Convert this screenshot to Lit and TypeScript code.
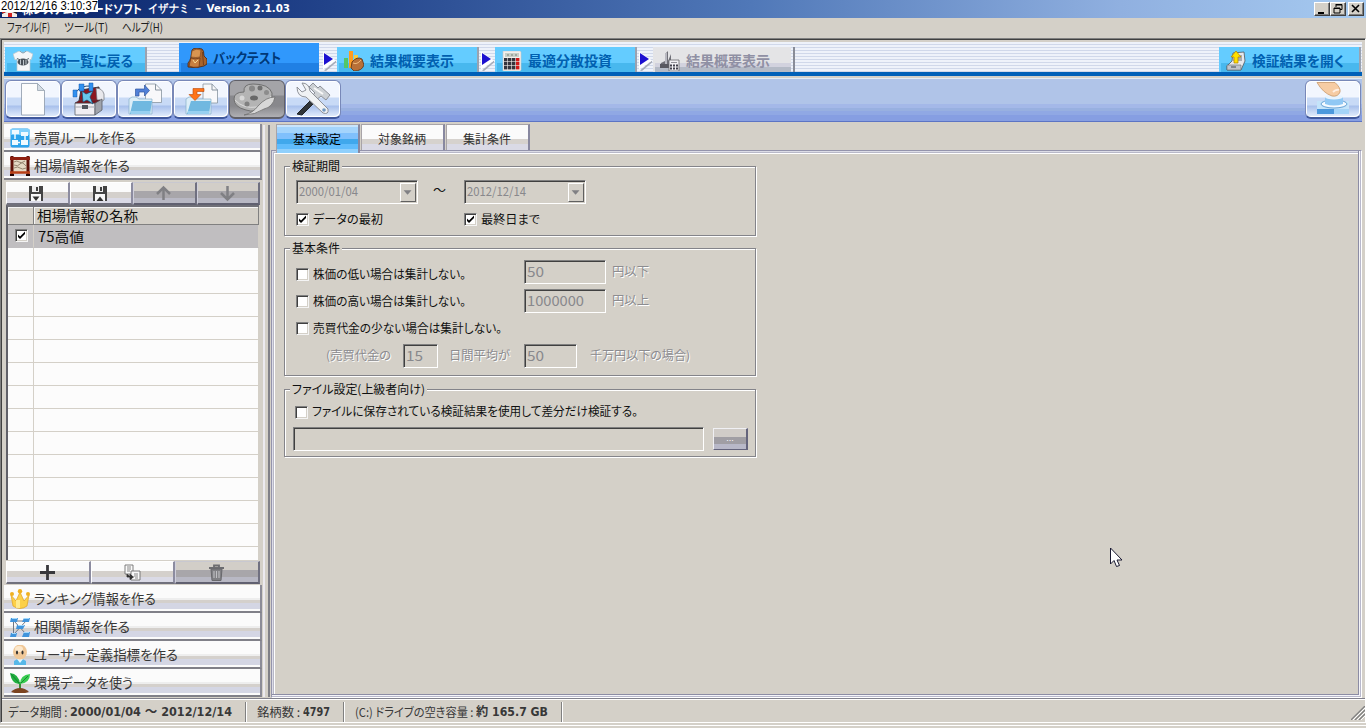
import { LitElement, css, html, nothing, svg } from 'lit'
import type { SVGTemplateResult } from 'lit'
import { styleMap } from 'lit/directives/style-map.js'
import { classMap } from 'lit/directives/class-map.js'

// Bitmap-style UI text: condensed or stretched so that the label takes exactly `w` pixels.
export class UiText extends LitElement {
  static properties = {
    text: { type: String },
    w: { type: Number },
  }

  declare text: string
  declare w: number

  constructor() {
    super()
    this.text = ''
    this.w = 0
  }

  static styles = css`
    :host {
      display: inline-block;
      white-space: pre;
      flex: none;
    }
    span {
      display: inline-block;
      transform-origin: 0 50%;
    }
  `

  updated() {
    this.style.width = `${this.w}px`
    const span = this.renderRoot.querySelector('span')
    if (!span) return
    span.style.transform = 'none'
    const natural = span.getBoundingClientRect().width
    if (natural > 0) span.style.transform = `scaleX(${this.w / natural})`
  }

  render() {
    return html`<span>${this.text}</span>`
  }
}

customElements.define('ui-text', UiText)

const t = (text: string, w: number) => html`<ui-text .text=${text} .w=${w}></ui-text>`

const icons: Record<string, SVGTemplateResult> = {
  shirt: svg`
    <path d="M6 0 L0 3 L2 9 L4 8 V20 H17 V8 L18 9 L20 3 L14 0 Q10 3 6 0Z" fill="#f4f6f8" stroke="#b8c4cc" stroke-width=".7"/>
    <path d="M7 0 Q10 4 13 0" fill="none" stroke="#88a4b4"/>
    <path d="M4 7.500 Q10 11 16 7.500" fill="none" stroke="#586870"/><ellipse cx="10" cy="11" rx="5.500" ry="3.500" fill="#485058"/><path d="M7.500 8.500v5M10.500 9v5.500M13 8.500v5" stroke="#dce4e8" stroke-width=".8"/>`,
  bag: svg`
    <path d="M5 2 Q6 0 10 0 L15 1 Q17 2 17 8 L20 11 L20 16 L17 18 Q9 21 1 19 L1 15 Q3 13 4 9 Z" fill="#a8642c" stroke="#4c2410" stroke-width=".8"/>
    <path d="M5 3 Q9 0 14 2 L13 9 Q9 10 4 9Z" fill="#d89450" stroke="#7c4420" stroke-width=".6"/>
    <path d="M4 10 Q8 12 13 10 L12 19 Q6 20 2 18Z" fill="#c88040" stroke="#683414" stroke-width=".7"/>
    <path d="M6 12l2 3 3-3" fill="none" stroke="#f4d890"/><path d="M15.500 4l1 13" stroke="#74401c"/>`,
  chartBag: svg`
    <path d="M0 7h4v10H0z" fill="#50c868"/><path d="M5 0h4v17H5z" fill="#ff9c20"/><path d="M10 4h4v12h-4z" fill="#f8cc40"/>
    <path d="M8 11 Q13 5 18 8 L20 14 Q18 20 10 20 L7 17Z" fill="#b87038" stroke="#5c3010" stroke-width=".8"/>
    <path d="M9 12 Q13 14 17 9" fill="none" stroke="#f0b878"/>`,
  calc: svg`
    <path d="M1 0h17l1 1v18l-1 1H1z" fill="#f4f0ec" stroke="#c8c8c8" stroke-width=".6"/><path d="M3 2h14v4H3z" fill="#c8d0c8"/>
    <path d="M5 4h2M9 4h2M13 4h2" stroke="#788078"/>
    ${[0, 1, 2, 3].map((c) => [0, 1, 2].map((r) => svg`<rect x=${2 + c * 4} y=${7 + r * 4} width="3.400" height="3.400" fill=${c === 3 ? '#d01818' : '#34343c'}></rect>`))}`,
  chartCalc: svg`
    <path d="M0 16l1-4 4-2V3l3-3v10l3-7v8h4v5z" fill="#707078"/><path d="M5 2h2v11H5z" fill="#b8b8c0"/><path d="M0 13h9v4H0z" fill="#585860"/>
    <path d="M9 9h10v11H9z" fill="#f0f0f4" stroke="#68686c" stroke-width=".8"/><path d="M11 11.500h6" stroke="#909098"/>
    <path d="M10 14.500h8M10 17.500h8" stroke="#40404c" stroke-width="2" stroke-dasharray="2 1"/>`,
  openBox: svg`
    <path d="M7 2 L18 1 L19 10 L15 19 L1 19 L1 15 L6 10Z" fill="#e8e8ec" stroke="#505860" stroke-width=".8"/>
    <path d="M8 4h8v6H7z" fill="#a8acb4"/><path d="M1 14h14v5H1z" fill="#c0c4cc" stroke="#606870" stroke-width=".6"/>
    <path d="M5 16h5" stroke="#404850"/><path d="M10 0 L15 6h-3v6H8V6H5z" fill="#ffe000" stroke="#b08000" stroke-width=".7"/>`,
  page: svg`
    <path d="M16.500 3.500h16l7 7v24.500H16.500z" fill="#fcfcfc" stroke="#8c98a8" stroke-width=".8"/><path d="M32.500 3.500v7h7z" fill="#d4dce4" stroke="#98a4b0" stroke-width=".8"/>`,
  chest: svg`
    <path d="M20 10 L38 7 L38 20 L34 21H18z" fill="#8c1820" stroke="#383840"/><path d="M35 8 Q41 8 43 14 V20 L38 23 L36 20z" fill="#e8e8ec" stroke="#6c7078" stroke-width=".7"/>
    <path d="M14 23h20v12H14z" fill="#f0eef2" stroke="#60646c" stroke-width=".8"/><path d="M34 23l7-4v11l-7 5z" fill="#a0a4ac" stroke="#585c64" stroke-width=".8"/>
    <path d="M14 23l5-3h20l-5 3z" fill="#7c1018" stroke="#484850" stroke-width=".6"/><path d="M14 27h20" stroke="#a4a8b0"/><path d="M21 25h6v4h-6z" fill="#50545c"/>
    <path d="M14 14 Q18 5 31 6" fill="none" stroke="#204870"/><path d="M12 10h4v7h-4z M18 4h5v7h-5z M28 3h4v8h-4z" fill="#3090f0" stroke="#1858a8" stroke-width=".5"/><path d="M21 11l4 3 7-3-3 6 3 7-6-4-4 2z" fill="#68c8ec" stroke="#184870" stroke-width=".7"/>`,
  folderOut: svg`
    <path d="M28.500 4h10l6 6v12.500H28.500z" fill="#f8f8fa" stroke="#8894a0" stroke-width=".8"/><path d="M38.500 4v6h6" fill="none" stroke="#8894a0"/>
    <path d="M12 19l3-2h4l3 2h13v15H12z" fill="#dceef8" stroke="#88b0c8" stroke-width=".7"/><path d="M16 21h19l-2 13H13z" fill="#70b8e0"/><path d="M14 32.500h19" stroke="#98d0f0" stroke-width="3"/>
    <path d="M18.500 16V9h9V5l5 5.500-5 5.500v-4H22v4z" fill="#5080d8" stroke="#3058a0" stroke-width=".7"/>`,
  folderIn: svg`
    <path d="M30 4h9l5.500 6v13H30z" fill="#f8f8fa" stroke="#8894a0" stroke-width=".8"/><path d="M39 4v6h6" fill="none" stroke="#8894a0"/>
    <path d="M13 19l3-2h4l3 2h15v15H13z" fill="#dceef8" stroke="#88b0c8" stroke-width=".7"/><path d="M18 21h20l-2 13H14z" fill="#70b8e0"/><path d="M15 32.500h21" stroke="#98d0f0" stroke-width="3"/>
    <path d="M31 8.500H20v6h-4l6 6 6-6h-4v-3h7z" fill="#ff7418" stroke="#b84808" stroke-width=".6"/>`,
  palette: svg`
    <path d="M5 19 Q5 12 15 12 Q14 4 24 4 Q40 4 43 13 Q44 23 34 28 Q26 33 17 30 Q5 27 5 19Z" fill="#b4b4b4" stroke="#707070"/>
    <path d="M6 20 Q14 29 28 27 Q38 24 42 16" fill="none" stroke="#dcdcdc"/><circle cx="23" cy="8.500" r="3" fill="#888"/><circle cx="31" cy="8" r="2.500" fill="#707070"/><circle cx="37.500" cy="12.500" r="2.500" fill="#8c8c8c"/>
    <circle cx="13" cy="18" r="2.500" fill="#d8d8d8"/><circle cx="18" cy="24" r="2.500" fill="#808080"/><ellipse cx="25" cy="18" rx="4" ry="2.500" fill="#686868"/>
    <path d="M15 35 Q24 33 29 26 Q37 17 46 17 Q44 27 35 29 Q26 35 15 35z" fill="#d8d8d8" stroke="#707070" stroke-width=".8"/>`,
  tools: svg`
    <path d="M12 34 L28 18 L31 21 L17 35 Z" fill="#303438" stroke="#202428"/><path d="M25 17 L30 13 L24 7 L28 3 L33 8 L35 6 L45 15 L41 20 L36 16 L30 21Z" fill="#ccd0d4" stroke="#787c84" stroke-width=".8"/><path d="M29 8l9 6" stroke="#f8f8f8" stroke-width="2"/>
    <path d="M12 7 L17 12 L21 10 L17 3 Q24 3 25 11 L43 29 Q44 35 38 33 L21 17 Q12 17 12 7Z" fill="#f0f2f4" stroke="#84888e" stroke-width=".9"/><circle cx="39" cy="30" r="1.800" fill="#7098c0"/>`,
  press: svg`
    <path d="M12 28h32v6H12z" fill="#4c98dc"/><path d="M12 21h32v8H12z" fill="#c4e4fa"/><path d="M29 29h15v5H29z" fill="#a4d4f8"/><ellipse cx="29" cy="24" rx="13" ry="4" fill="#f4faff" stroke="#5898d0" stroke-width=".9"/>
    <path d="M20 17v7q9 3 18 0v-7z" fill="#90c8f4"/><ellipse cx="29" cy="17" rx="9" ry="2.500" fill="#e8f4ff"/>
    <path d="M12 2.500H30 Q36 8 35 12 Q33 17 27 16 Q18 13 12 2.500Z" fill="#f6cca4" stroke="#c89868" stroke-width=".8"/><path d="M28 12 Q31 9 34 10" fill="none" stroke="#fff0e4" stroke-width="1.800"/>`,
  flow: svg`
    <rect x=".5" y=".5" width="19" height="19" rx="2" fill="#2ca4ec"/><path d="M.5 1h19v6H.5z" fill="#80d0fc"/>
    <path d="M2 2h7v4H2z M11 4h7v4h-7z M2 12h6v5H2z M11 12h7v5h-7z" fill="#f0faff"/><path d="M5 6v5M15 8v4M7 14.500h3" stroke="#f0faff" stroke-width="1.500"/>`,
  frame: svg`
    <path d="M2 2h16v14H2z" fill="#e4d8c4"/><path d="M4 6q3-2 5 0t6-1M4 9q4 2 6-1t6 2M4 12q4-2 6 0t6 0" fill="none" stroke="#8c7c68" stroke-width=".9"/>
    <path d="M2 0v19M18 0v19" stroke="#5c1008" stroke-width="3"/><path d="M0 2.500h20" stroke="#902010" stroke-width="3"/><path d="M0 16.500h20" stroke="#b84018" stroke-width="2.500"/><path d="M0 19h4M16 19h4" stroke="#200404" stroke-width="2"/>`,
  crown: svg`
    <path d="M1 6l5 6 4-9 4 9 5-6-2 11q-7 5-14 0z" fill="#fcd048" stroke="#e0a020" stroke-width=".7"/><path d="M6 11h4v8H6z" fill="#fff0a0" opacity=".8"/>
    <circle cx="10" cy="2.200" r="2.200" fill="#f0b020"/><circle cx="2" cy="5" r="2" fill="#f0b020"/><circle cx="18" cy="5" r="2" fill="#f0b020"/>`,
  relation: svg`
    <path d="M4 4l12 13M16 4L4 17M4 4h12M3.500 4v13" fill="none" stroke="#707884"/>
    <path d="M1 1h7l-1 4H0zM14 1h6l-1 4h-7zM7 8h8l-2 4H6zM1 16h6l-1 4H0zM14 15h6l-1 5h-7z" fill="#4094dc"/><path d="M2 1.500h5M14 1.500h5M8 8.500h6M2 16.500h4M14 15.500h5" stroke="#a0d8fc"/>`,
  person: svg`
    <path d="M4 20v-4q6-5 12 0v4z" fill="#58b8e8"/><path d="M7 14l3 4 3-4z" fill="#e8f8ff"/><ellipse cx="10" cy="7" rx="7" ry="7.500" fill="#f0c898"/><ellipse cx="9" cy="4" rx="4" ry="3" fill="#fce8cc"/>
    <ellipse cx="7" cy="7.500" rx="1" ry="2" fill="#303030"/><ellipse cx="12.500" cy="7.500" rx="1" ry="2" fill="#303030"/>`,
  sprout: svg`
    <path d="M10 18V9" stroke="#388c38" stroke-width="2"/><path d="M10 11Q2 12 0 0Q9 1 10 11Z" fill="#20b040"/><path d="M10 11Q10 2 20 1Q20 10 10 11Z" fill="#38cc50"/><path d="M1 1l8 9M11 10l7-7" stroke="#107828" stroke-width=".8"/>
    <path d="M1 19q4-4 9-4t9 4q-9 3-18 0z" fill="#7c4420"/>`,
  save: svg`
    <path d="M1 1h14v15H1z" fill="#444"/><path d="M4 1h7v6H4z" fill="#f0f0f0"/><path d="M8 2h2v4H8z" fill="#404040"/><path d="M3 9h10v7H3z" fill="#f8f8f8"/><path d="M4.500 11.500h7l-3.500 4.500z" fill="#303030"/>`,
  load: svg`
    <path d="M1 1h14v15H1z" fill="#444"/><path d="M4 1h7v6H4z" fill="#f0f0f0"/><path d="M8 2h2v4H8z" fill="#404040"/><path d="M3 9h10v7H3z" fill="#f8f8f8"/><path d="M4.500 16h7l-3.500-4.500z" fill="#303030"/>`,
  up: svg`<path d="M8.500 15V3M2 9l6.500-6.500L15 9" fill="none" stroke="#808084" stroke-width="2.500"/>`,
  down: svg`<path d="M8.500 1v13M2 8l6.500 6.500L15 8" fill="none" stroke="#808084" stroke-width="2.500"/>`,
  plus: svg`<path d="M8.500 1v15M1 8.500h15" stroke="#38383c" stroke-width="2.800"/>`,
  copy: svg`
    <path d="M1 1h8v9H1z" fill="#fafafa" stroke="#707070" stroke-width=".9"/><path d="M3 3h4M3 5h4M3 7h3" stroke="#888"/><path d="M7 7h9v9H7z" fill="#fafafa" stroke="#707070" stroke-width=".9"/>
    <path d="M10 10h4M10 12h4M11 14h3" stroke="#888"/><path d="M3 10v3h4M6 10.500l3.500 2.500L6 15.500z" fill="#303030" stroke="#303030" stroke-width=".8"/>`,
  trash: svg`<path d="M1 4h15M6 3V1.500h5V3" fill="none" stroke="#6c6c70" stroke-width="1.800"/><path d="M3 5h11l-1 11.500H4z" fill="#808084" stroke="#68686c"/><path d="M6 7v7M8.500 7v7M11 7v7" stroke="#c0c0c4" stroke-width="1.100"/>`,
  app: svg`<path d="M0 1h15v16H0z" fill="#301818"/><path d="M3 5h9v7H3z" fill="#f0d0b0"/><path d="M0 14q7-5 15 0v3H0z" fill="#f4ece8"/><path d="M6 13h4v4H6zM0 11h3v2H0z" fill="#d02020"/>`,
}

const icon = (name: string, w: number, h = w) =>
  html`<svg class="icon" width=${w} height=${h} viewBox="0 0 ${w} ${h}">${icons[name]}</svg>`

interface Step {
  icon: string
  text: string
  w: number
  state: string
}

const steps: Step[] = [
  { icon: 'bag', text: 'バックテスト', w: 68, state: 'on' },
  { icon: 'chartBag', text: '結果概要表示', w: 84, state: '' },
  { icon: 'calc', text: '最適分散投資', w: 84, state: '' },
  { icon: 'chartCalc', text: '結果概要表示', w: 84, state: 'off' },
]

const tools = ['page', 'chest', 'folderOut', 'folderIn', 'palette', 'tools']

export class AppRoot extends LitElement {
  static styles = css`
    *,
    *::before,
    *::after {
      box-sizing: border-box;
    }
    :host {
      display: flex;
      flex-direction: column;
      position: relative;
      width: 1366px;
      height: 728px;
      overflow: hidden;
      background: #d4d0c8;
      color: #101010;
      font: 12px/16px 'Noto Sans CJK JP', sans-serif;
      font-feature-settings: 'palt';
    }
    .icon {
      display: block;
      flex: none;
    }
    /* title + menu */
    .title {
      display: flex;
      align-items: center;
      flex: none;
      height: 18px;
      padding: 0 2px 0 2px;
      background: linear-gradient(90deg, #0a246a, #1c3c84 20%, #5078b8 55%, #90b0e0 82%, #a6caf0);
      color: #fff;
      font-weight: 700;
    }
    .title .icon {
      margin-right: 4px;
    }
    .title .version {
      font-family: 'DejaVu Sans', sans-serif;
      font-size: 11px;
      margin-left: 6px;
    }
    .winbtns {
      display: flex;
      margin-left: auto;
    }
    .winbtns svg {
      width: 16px;
      height: 14px;
      background: #d4d0c8;
      border: 1px solid;
      border-color: #fff #404040 #404040 #fff;
      box-shadow: inset -1px -1px #808080;
    }
    .winbtns svg:last-child {
      margin-left: 2px;
    }
    .clock {
      position: absolute;
      left: 0;
      top: 0;
      width: 98px;
      height: 12px;
      padding-left: 1px;
      background: #fff;
      color: #000;
      font: 12px/12px 'Liberation Sans', sans-serif;
    }
    .menu {
      display: flex;
      flex: none;
      height: 20px;
      gap: 14px;
      padding: 1px 0 0 7px;
      color: #202020;
    }
    .client {
      display: flex;
      flex-direction: column;
      flex: none;
      height: 685px;
      border-top: 1px solid #808080;
      border-left: 1px solid #808080;
      border-right: 1px solid #fff;
      border-bottom: 1px solid #fff;
    }
    .inner {
      display: flex;
      flex-direction: column;
      height: 683px;
      border-top: 1px solid #404040;
      border-left: 1px solid #404040;
      padding: 2px 3px 0 2px;
    }
    /* step tabs */
    .steps {
      display: flex;
      align-items: flex-end;
      flex: none;
      height: 34px;
      border-bottom: 4px solid #0060b8;
      background: repeating-linear-gradient(#eef2fa 0 2px, #d0d8ea 2px 3px);
      padding: 0 1px;
    }
    .step {
      display: flex;
      align-items: center;
      flex: none;
      width: 142px;
      height: 25px;
      padding: 2px 0 0 7px;
      gap: 6px;
      background: linear-gradient(#64ccff 0 16px, #48b8ee 16px) 2px 0 / 138px 100% no-repeat,
        linear-gradient(#64ccff, #64ccff) 0 0 / 140px 100% no-repeat;
      border-right: 2px solid #9aa2b0;
      color: #0060b0;
      font-size: 14px;
      font-weight: 700;
    }
    .step ui-text {
      margin-top: -2px;
    }
    .step.on {
      height: 29px;
      width: 140px;
      border-right: 0;
      background: linear-gradient(#3098fc 0 20px, #2080e4 20px) 2px 0 / 138px 100% no-repeat,
        #3098fc;
      color: #003878;
      padding-left: 8px;
      padding-bottom: 1px;
    }
    .step.off {
      background: linear-gradient(#e4e4e6 0 16px, #d2d2de 16px 20px, #b4bac6 20px) 2px 0 / 136px
          100% no-repeat,
        linear-gradient(#e4e4e6, #e4e4e6) 0 0 / 138px 100% no-repeat;
      border-right-color: #888c98;
      color: #9090a4;
    }
    .back {
      margin-right: 32px;
      padding-left: 8px;
    }
    .open {
      margin-left: auto;
    }
    .arrow {
      flex: none;
      width: 14px;
      height: 20px;
      margin: 0 0 1px 2px;
    }
    .step.on + .arrow {
      margin-left: 4px;
    }
    /* toolbar */
    .tools {
      display: flex;
      flex: none;
      height: 44px;
      margin-top: 2px;
      padding: 2px 1px;
      background: linear-gradient(#e0ecf8 0 1px, #b0c4e8 1px 26px, #a4b8e8 26px 30px, #98b0e0 30px 33px, #90a8e4 33px 37px, #869ee2 37px 43px, #5c74c4 43px);
    }
    .tool {
      width: 56px;
      height: 39px;
      border: 1px solid #7888b8;
      border-bottom: 2px solid #40589c;
      border-radius: 6px;
      background: linear-gradient(#f2f6fe 0 16px, #c8daf6 17px 24px, #a8c0ec 25px, #e4eefc 36px);
      box-shadow: inset 1px 1px #fff, inset -1px -1px #fff;
    }
    .tool svg {
      margin: -1px 0 0 -1px;
    }
    .tool.on {
      background: linear-gradient(#a4a4a8 0 14px, #88888c 15px 25px, #b0b0b4);
      box-shadow: none;
      border-color: #606068;
    }
    .run {
      margin-left: auto;
    }
    /* body */
    .body {
      display: flex;
      flex: none;
      height: 576px;
    }
    .side {
      width: 258px;
      padding-top: 2px;
    }
    .nav {
      display: flex;
      align-items: center;
      gap: 4px;
      height: 28px;
      padding: 1px 0 0 6px;
      border-right: 2px solid #8c8c98;
      border-bottom: 2px solid #808088;
      background: linear-gradient(#fbfbfb 0 13px, #eeeeee 13px 15px, #d4d0cc 15px 18px, #d4d6e4 18px 24px, #fbfbfb 24px);
      color: #383838;
      font-size: 14px;
    }
    .nav ui-text {
      margin-top: -2px;
    }
    .btns {
      display: flex;
      height: 23px;
      margin: 2px 2px 0 2px;
    }
    .btn {
      display: flex;
      flex: 1;
      align-items: center;
      justify-content: center;
      border: 1px solid;
      border-color: #fff #8c8ca0 #70707c #fff;
      border-right-width: 2px;
      border-bottom-width: 2px;
      padding-right: 1px;
      background: linear-gradient(#fbfbfb 0 9px, #d4d0cc 9px 15px, #dadae6 15px);
    }
    .btn.off {
      background: linear-gradient(#d2cec8 0 8px, #a8a6aa 8px 15px, #b8b8c4 15px);
      border-color: #c8c8d0 #707080 #606070 #d0d0dc;
    }
    .grid {
      display: grid;
      grid-template-columns: 26px 1fr;
      grid-template-rows: 18px;
      grid-auto-rows: 23px;
      height: 355px;
      margin: 0 3px 0 2px;
      overflow: hidden;
      border-top: 2px solid #707078;
      border-left: 2px solid #606068;
      background: #fcfcfc;
      font-size: 14px;
    }
    .grid > div {
      border-right: 1px solid #d4d0c8;
      border-bottom: 1px solid #d4d0c8;
      padding: 3px 0 0 4px;
    }
    .grid > div.check {
      padding: 4px 0 0 7px;
    }
    .grid > div.head {
      background: #d4d0c8;
      border-color: #808080;
      box-shadow: inset 1px 1px #f4f4f4;
      padding: 0 0 0 3px;
    }
    .grid > div.sel {
      background: #c0bec0;
      border-bottom-color: #c0bec0;
    }
    .grid + .btns {
      margin-top: 1px;
      margin-bottom: 1px;
    }
    .split {
      width: 7px;
      border-left: 2px solid #eceaf0;
      border-right: 2px solid #808088;
      margin: 3px 0 1px 1px;
    }
    .main {
      flex: 1;
      display: flex;
      flex-direction: column;
      padding: 2px 0 0 1px;
    }
    .tabs {
      display: flex;
      flex: none;
      gap: 1px;
      height: 26px;
      padding-left: 5px;
      position: relative;
    }
    .tab {
      display: flex;
      align-items: center;
      justify-content: center;
      width: 84px;
      height: 26px;
      padding: 2px 1px 0 0;
      border: 1px solid #a8a4a8;
      border-right: 2px solid #8888a0;
      border-bottom: 0;
      background: linear-gradient(#fbfbfb 0 14px, #d6d2ce 14px 19px, #dadae6 19px);
      color: #303030;
    }
    .tab.on {
      height: 29px;
      background: linear-gradient(#c8e4fc 0 2px, #a4d4fc 2px 8px, #80c0fc 8px 14px, #40a8ec 14px 19px, #60bcfc 19px 24px, #90d0fc 24px);
      color: #000;
      padding-bottom: 3px;
    }
    .pane {
      flex: 1;
      border: 1px solid;
      border-color: #9494ac #fff #fff #9494ac;
      box-shadow: inset -1px -1px #b8b8cc, inset -2px -2px #f4f4f8, inset -3px -3px #8c8ca4,
        inset 1px 1px #dcdce6, inset 2px 2px #b8b8c8, inset 3px 3px #fff;
      padding: 15px 0 0 12px;
    }
    .group {
      width: 472px;
      border: 1px solid #84848a;
      box-shadow: 1px 1px #fff, inset 1px 1px #fff;
      padding: 0 0 0 11px;
    }
    .legend {
      display: table;
      height: 16px;
      margin: -9px 0 0 -6px;
      padding: 0 2px;
      background: #d4d0c8;
    }
    .g1 {
      height: 70px;
    }
    .g2 {
      height: 128px;
      margin-top: 12px;
    }
    .g3 {
      height: 68px;
      margin-top: 13px;
      padding-left: 8px;
    }
    .g3 .legend {
      margin-left: -3px;
    }
    .row {
      display: flex;
      align-items: center;
    }
    .row > span ui-text {
      margin-top: -1px;
    }
    .combo,
    .field {
      display: flex;
      flex: none;
      height: 24px;
      border: 1px solid;
      border-color: #808080 #fff #fff #808080;
      box-shadow: inset 1px 1px #404040;
      color: #88888c;
      text-shadow: none;
    }
    .combo {
      width: 122px;
      justify-content: space-between;
      padding: 2px 1px 1px 2px;
    }
    .combo svg {
      border: 1px solid;
      border-color: #fff #606060 #606060 #fff;
    }
    .field {
      padding: 3px 0 0 2px;
      font-size: 14px;
      line-height: 15px;
    }
    .checkbox {
      flex: none;
      display: block;
      width: 13px;
      height: 13px;
      border: 1px solid;
      border-color: #808080 #f4f4f4 #f4f4f4 #808080;
      box-shadow: inset 1px 1px #404040, inset -1px -1px #d4d0c8;
      background: #fff;
    }
    .checkbox + ui-text {
      margin-left: 4px;
    }
    .dates {
      margin-top: 6px;
      height: 24px;
    }
    .dates .tilde {
      width: 46px;
      padding: 0 0 4px 15px;
    }
    .checks {
      height: 16px;
      margin-top: 7px;
    }
    .checks > span {
      display: flex;
      align-items: center;
      width: 168px;
    }
    .cond {
      height: 28px;
      margin-top: 2px;
    }
    .cond + .cond {
      margin-top: 1px;
    }
    .cond > span {
      display: flex;
      align-items: center;
      width: 228px;
      padding-top: 5px;
    }
    .cond + .cond > span {
      padding-top: 1px;
    }
    .cond + .cond.turn {
      height: 23px;
      margin-top: 0;
    }
    .cond + .cond.turn > span {
      padding-top: 4px;
    }
    .cond .dim {
      margin: -2px 0 0 6px;
    }
    .dim {
      color: #8c8c90;
      text-shadow: 1px 1px #fff;
    }
    .sub {
      display: grid;
      grid-template-columns: 77px 46px 75px 66px auto;
      align-items: center;
      margin-top: 6px;
      padding-left: 30px;
    }
    .sub > ui-text {
      margin-top: -2px;
    }
    .file-check {
      height: 16px;
      margin-top: 7px;
      padding-left: 2px;
    }
    .file-check ui-text {
      margin-top: -2px;
    }
    .file {
      margin-top: 7px;
    }
    .browse {
      flex: none;
      width: 35px;
      height: 22px;
      margin: -1px 0 0 9px;
      border: 1px solid;
      border-color: #f0f0f4 #64647c #64647c #f0f0f4;
      border-right-width: 2px;
      background: linear-gradient(#d0ccc8 0 8px, #a09ea4 8px 15px, #b8b8c8 15px);
      color: #fff;
      text-align: center;
      font: 9px/18px 'Liberation Sans', sans-serif;
    }
    /* status */
    .status {
      display: flex;
      align-items: center;
      flex: 1;
      margin: 0 -3px 0 -2px;
      border-top: 1px solid #80808c;
      box-shadow: inset 0 1px #fff;
      padding: 2px 0 0 6px;
      color: #383838;
    }
    .status b {
      font: 700 12px/18px 'DejaVu Sans Condensed', 'DejaVu Sans', 'Noto Sans CJK JP', sans-serif;
    }
    .status i {
      width: 2px;
      height: 20px;
      border-left: 1px solid #808080;
      border-right: 1px solid #fff;
      margin: 0 10px 0 13px;
    }
    .grip {
      margin: 3px 0 0 auto;
    }
    .edge {
      height: 3px;
      border-bottom: 1px solid #fff;
    }
    .cursor {
      position: absolute;
      left: 1110px;
      top: 547px;
    }
  `

  checkbox(on = false) {
    return html`<svg class="checkbox" viewBox="1 1 11 11">
      ${on ? svg`<path d="M3 5.500v2.500l2 2 5-5V2.500l-5 5z" fill="#000"></path>` : nothing}
    </svg>`
  }

  arrow() {
    return html`<svg class="arrow" viewBox="0 0 14 20">
      <path d="M1 19.500L13 9.500v2L3 20z" fill="#a8acb8" /><path d="M0 .500v18l13-9z" fill="#fff" />
      <path d="M1 2v12l9-6z" fill="#1c10d0" />
    </svg>`
  }

  nav(name: string, text: string, w: number) {
    return html`<div class="nav">${icon(name, 20)}${t(text, w)}</div>`
  }

  btn(name: string, off = false) {
    return html`<div class=${classMap({ btn: true, off })}>${icon(name, 17)}</div>`
  }

  combo(text: string) {
    return html`<div class="combo">
      ${t(text, 59)}
      <svg width="16" height="19" viewBox="0 0 16 19"><path d="M3 7h9l-4.500 5z" fill="#808084" /></svg>
    </div>`
  }

  field(text: string, textWidth: number, width: number) {
    return html`<div class="field" style=${styleMap({ width: `${width}px` })}>
      ${text ? t(text, textWidth) : nothing}
    </div>`
  }

  render() {
    return html`
      <div class="title">
        ${icon('app', 16, 18)}${t('株システムトレードソフト', 120)}
        <span class="version">${t('イザナミ － Version 2.1.03', 142)}</span>
        <div class="winbtns">
          <svg viewBox="0 0 14 12"><path d="M3 9h6v2H3z" /></svg>
          <svg viewBox="0 0 14 12"><path d="M5 1.500h6v5H9M5 1v3M5 2h6M3 5h6v5H3zM3 5.500h6" fill="none" stroke="#000" /></svg>
          <svg viewBox="0 0 14 12"><path d="M3 2l7 7M10 2l-7 7" stroke="#000" stroke-width="1.600" /></svg>
        </div>
      </div>
      <div class="clock">${t('2012/12/16 3:10:37', 97)}</div>
      <div class="menu">${t('ファイル(F)', 43)}${t('ツール(T)', 44)}${t('ヘルプ(H)', 41)}</div>
      <div class="client">
        <div class="inner">
          <div class="steps">
            <div class="step back">${icon('shirt', 20)}${t('銘柄一覧に戻る', 94)}</div>
            ${steps.map(
              (s, i) => html`
                ${i > 0 ? this.arrow() : nothing}
                <div class="step ${s.state}">${icon(s.icon, 20)}${t(s.text, s.w)}</div>
              `,
            )}
            <div class="step open">${icon('openBox', 20)}${t('検証結果を開く', 92)}</div>
          </div>
          <div class="tools">
            ${tools.map(
              (name) => html`<div class=${classMap({ tool: true, on: name === 'palette' })}>${icon(name, 56, 38)}</div>`,
            )}
            <div class="tool run">${icon('press', 56, 38)}</div>
          </div>
          <div class="body">
            <div class="side">
              ${this.nav('flow', '売買ルールを作る', 102)} ${this.nav('frame', '相場情報を作る', 96)}
              <div class="btns">${this.btn('save')}${this.btn('load')}${this.btn('up', true)}${this.btn('down', true)}</div>
              <div class="grid">
                <div class="head"></div>
                <div class="head">${t('相場情報の名称', 101)}</div>
                <div class="sel check">${this.checkbox(true)}</div>
                <div class="sel">${t('75高値', 46)}</div>
                ${Array.from({ length: 14 }, () => html`<div></div><div></div>`)}
              </div>
              <div class="btns">${this.btn('plus')}${this.btn('copy')}${this.btn('trash', true)}</div>
              ${this.nav('crown', 'ランキング情報を作る', 122)} ${this.nav('relation', '相関情報を作る', 96)}
              ${this.nav('person', 'ユーザー定義指標を作る', 144)} ${this.nav('sprout', '環境データを使う', 99)}
            </div>
            <div class="split"></div>
            <div class="main">
              <div class="tabs">
                <div class="tab on">${t('基本設定', 48)}</div>
                <div class="tab">${t('対象銘柄', 48)}</div>
                <div class="tab">${t('集計条件', 48)}</div>
              </div>
              <div class="pane">${this.renderPeriod()}${this.renderConditions()}${this.renderFile()}</div>
            </div>
          </div>
          <div class="status">
            ${t('データ期間 : ', 62)}<b>${t('2000/01/04 ～ 2012/12/14', 162)}</b><i></i> ${t('銘柄数 : ', 46)}<b
              >${t('4797', 27)}</b
            ><i></i> ${t('(C:) ドライブの空き容量 : ', 121)}<b>${t('約 165.7 GB', 72)}</b><i></i>
            <svg class="grip" width="14" height="14" viewBox="0 0 14 14">
              <path d="M0 14L14 0M4 14L14 4M8 14l6-6" stroke="#808080" stroke-width="1.300" />
              <path d="M2 14L14 2M6 14l8-8M10 14l4-4" stroke="#fff" />
            </svg>
          </div>
        </div>
      </div>
      <div class="edge"></div>
      <svg class="cursor" width="14" height="21" viewBox="0 0 14 21">
        <path d="M.500 1v16l3.500-3.500 2.500 6 3-1-2.500-5.500h5z" fill="#fff" stroke="#181830" />
      </svg>
    `
  }

  renderPeriod() {
    return html`<div class="group g1">
      <div class="legend">${t('検証期間', 48)}</div>
      <div class="row dates">
        ${this.combo('2000/01/04')}<span class="tilde">${t('～', 13)}</span>${this.combo('2012/12/14')}
      </div>
      <div class="row checks">
        <span>${this.checkbox(true)}${t('データの最初', 70)}</span>
        <span>${this.checkbox(true)}${t('最終日まで', 59)}</span>
      </div>
    </div>`
  }

  renderConditions() {
    return html`<div class="group g2">
      <div class="legend">${t('基本条件', 48)}</div>
      <div class="row cond">
        <span>${this.checkbox()}${t('株価の低い場合は集計しない。', 153)}</span>
        ${this.field('50', 17, 82)}
        <div class="dim">${t('円以下', 37)}</div>
      </div>
      <div class="row cond">
        <span>${this.checkbox()}${t('株価の高い場合は集計しない。', 153)}</span>
        ${this.field('1000000', 57, 82)}
        <div class="dim">${t('円以上', 37)}</div>
      </div>
      <div class="row cond turn">
        <span>${this.checkbox()}${t('売買代金の少ない場合は集計しない。', 189)}</span>
      </div>
      <div class="sub dim">
        ${t('(売買代金の', 65)} ${this.field('15', 17, 35)} ${t('日間平均が', 61)} ${this.field('50', 17, 53)}
        ${t('千万円以下の場合)', 100)}
      </div>
    </div>`
  }

  renderFile() {
    return html`<div class="group g3">
      <div class="legend">${t('ファイル設定(上級者向け)', 133)}</div>
      <div class="row file-check">
        ${this.checkbox()}${t('ファイルに保存されている検証結果を使用して差分だけ検証する。', 326)}
      </div>
      <div class="row file">${this.field('', 0, 411)}<div class="browse">...</div></div>
    </div>`
  }
}

customElements.define('app-root', AppRoot)

declare global {
  interface HTMLElementTagNameMap {
    'ui-text': UiText
    'app-root': AppRoot
  }
}
